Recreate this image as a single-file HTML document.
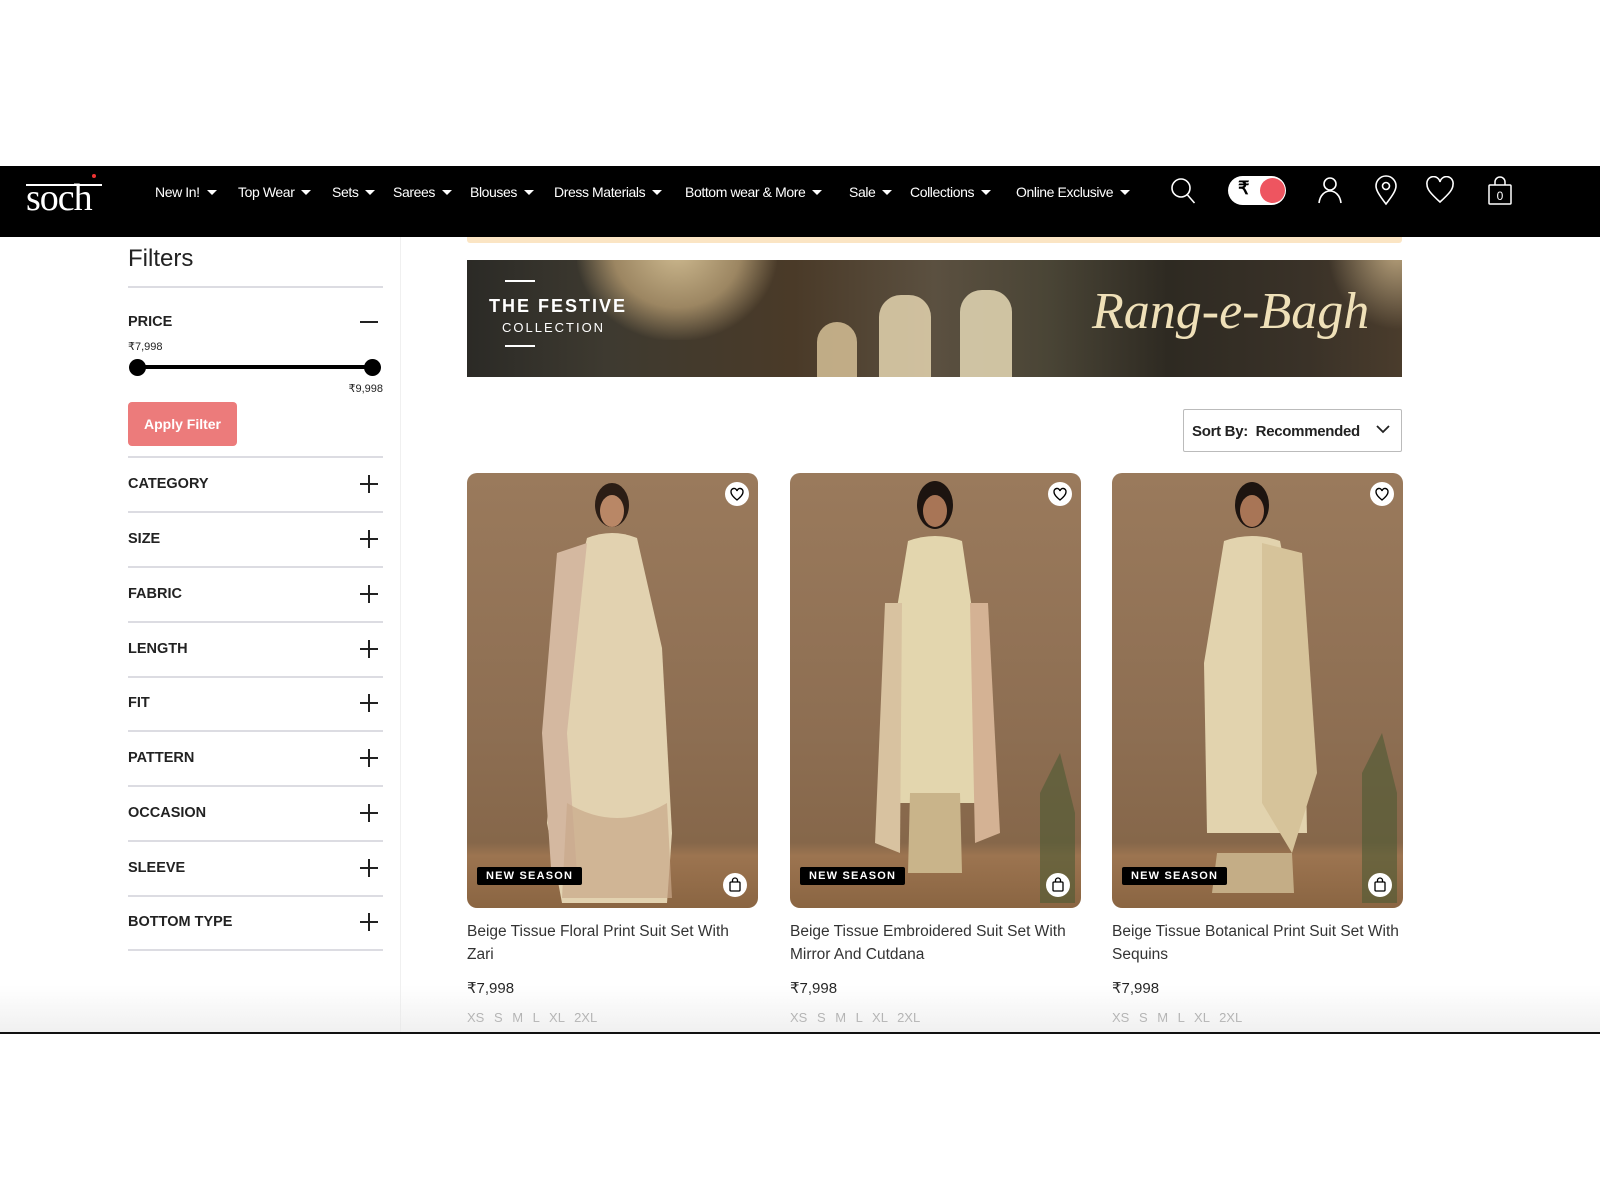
<!DOCTYPE html>
<html><head><meta charset="utf-8">
<style>
*{margin:0;padding:0;box-sizing:border-box}
body{width:1600px;height:1200px;background:#fff;position:relative;overflow:hidden;font-family:"Liberation Sans",sans-serif;color:#222}
.abs{position:absolute}
.nav{left:0;top:166px;width:1600px;height:71px;background:#000}
.nav .m{position:absolute;top:18px;color:#fff;font-size:14px;letter-spacing:-0.4px;white-space:nowrap}
.nav .m:after{content:"";display:inline-block;margin-left:7px;border-left:5px solid transparent;border-right:5px solid transparent;border-top:5px solid #fff;vertical-align:2px}
.ft{left:128px;width:255px;border-top:2px solid #dcdce2}
.fl{left:128px;font-size:14.5px;font-weight:bold;color:#222}
.plus{position:absolute;left:360px;width:18px;height:18px}
.plus:before{content:"";position:absolute;left:0;top:8px;width:18px;height:2px;background:#222}
.plus:after{content:"";position:absolute;left:8px;top:0;width:2px;height:18px;background:#222}
.card{position:absolute;top:473px;width:291px;height:435px;border-radius:10px;overflow:hidden;background:linear-gradient(180deg,#9a7a5c 0%,#8d6e52 60%,#86674a 85%,#9c7450 88%,#8a6542 100%)}
.wish{position:absolute;right:9px;top:9px;width:24px;height:24px;border-radius:50%;background:#fff}
.bagc{position:absolute;right:11px;bottom:11px;width:24px;height:24px;border-radius:50%;background:#fff}
.badge{position:absolute;left:10px;bottom:23px;background:#000;color:#fff;font-size:11px;font-weight:bold;letter-spacing:1.2px;padding:3px 9px;border-radius:2px}
.tt{position:absolute;font-size:15.5px;color:#333;line-height:23px;width:300px}
.pr{position:absolute;font-size:15px;color:#222}
.sz{position:absolute;font-size:13px;color:#999;word-spacing:6px}
</style></head><body>

<div class="abs nav">
  <div class="abs" style="left:26px;top:10px;color:#fff;font-family:'Liberation Serif',serif;font-size:38px;letter-spacing:-1px">soch</div>
  <div class="abs" style="left:26px;top:18px;width:76px;height:2px;background:#fff"></div>
  <div class="abs" style="left:92px;top:8px;width:4px;height:4px;border-radius:50%;background:#e33"></div>
  <span class="m" style="left:155px">New In!</span>
  <span class="m" style="left:238px">Top Wear</span>
  <span class="m" style="left:332px">Sets</span>
  <span class="m" style="left:393px">Sarees</span>
  <span class="m" style="left:470px">Blouses</span>
  <span class="m" style="left:554px">Dress Materials</span>
  <span class="m" style="left:685px">Bottom wear &amp; More</span>
  <span class="m" style="left:849px">Sale</span>
  <span class="m" style="left:910px">Collections</span>
  <span class="m" style="left:1016px">Online Exclusive</span>
  <svg class="abs" style="left:1170px;top:11px" width="28" height="30" viewBox="0 0 28 30" fill="none" stroke="#fff" stroke-width="1.6"><circle cx="11" cy="11" r="9"/><path d="M17.5 18l7 8"/></svg>
  <div class="abs" style="left:1228px;top:10px;width:58px;height:29px;border-radius:15px;background:#fff"></div>
  <div class="abs" style="left:1238px;top:12px;font-size:18px;font-weight:bold;color:#000">₹</div>
  <div class="abs" style="left:1260px;top:12px;width:25px;height:25px;border-radius:50%;background:#ee5560"></div>
  <svg class="abs" style="left:1316px;top:9px" width="28" height="30" viewBox="0 0 28 30" fill="none" stroke="#fff" stroke-width="1.6"><circle cx="14" cy="9" r="6"/><path d="M3 28c1-8 6-12 11-12s10 4 11 12"/></svg>
  <svg class="abs" style="left:1374px;top:9px" width="24" height="32" viewBox="0 0 24 32" fill="none" stroke="#fff" stroke-width="1.6"><path d="M12 29C5 20 2 15 2 11a10 10 0 0 1 20 0c0 4-3 9-10 18z"/><circle cx="12" cy="11" r="3.5"/></svg>
  <svg class="abs" style="left:1425px;top:10px" width="30" height="28" viewBox="0 0 30 28" fill="none" stroke="#fff" stroke-width="1.6"><path d="M15 26C5 17 2 13 2 8.5A6.5 6.5 0 0 1 15 6a6.5 6.5 0 0 1 13 2.5C28 13 25 17 15 26z"/></svg>
  <svg class="abs" style="left:1487px;top:10px" width="26" height="30" viewBox="0 0 26 30" fill="none" stroke="#fff" stroke-width="1.5"><rect x="2" y="9" width="22" height="19" rx="1"/><path d="M8 9V6a5 5 0 0 1 10 0v3"/><text x="13" y="24" fill="#fff" stroke="none" font-size="12" text-anchor="middle" font-family="Liberation Sans">0</text></svg>
</div>

<div class="abs" style="left:467px;top:237px;width:935px;height:6px;background:#fbe5c4;border-radius:0 0 3px 3px"></div>

<div class="abs" style="left:128px;top:245px;font-size:24px;color:#222">Filters</div>
<div class="abs" style="left:400px;top:237px;width:1px;height:796px;background:#f0f0f0"></div>
<div class="abs ft" style="top:286px"></div>
<div class="abs fl" style="top:314px">PRICE</div>
<div class="abs" style="left:360px;top:321px;width:18px;height:2px;background:#222"></div>
<div class="abs" style="left:128px;top:340px;font-size:11px">₹7,998</div>
<div class="abs" style="left:137px;top:365px;width:236px;height:4px;background:#000"></div>
<div class="abs" style="left:129px;top:359px;width:17px;height:17px;border-radius:50%;background:#000"></div>
<div class="abs" style="left:364px;top:359px;width:17px;height:17px;border-radius:50%;background:#000"></div>
<div class="abs" style="left:340px;top:382px;font-size:11px;width:43px;text-align:right">₹9,998</div>
<div class="abs" style="left:128px;top:402px;width:109px;height:44px;border-radius:4px;background:#ec7b7b;color:#fff;font-size:14px;font-weight:bold;text-align:center;line-height:44px">Apply Filter</div>
<div class="abs ft" style="top:456px"></div>

<div class="abs fl" style="top:476px">CATEGORY</div><div class="plus" style="top:475px"></div>
<div class="abs ft" style="top:511px"></div>
<div class="abs fl" style="top:531px">SIZE</div><div class="plus" style="top:530px"></div>
<div class="abs ft" style="top:566px"></div>
<div class="abs fl" style="top:586px">FABRIC</div><div class="plus" style="top:585px"></div>
<div class="abs ft" style="top:621px"></div>
<div class="abs fl" style="top:641px">LENGTH</div><div class="plus" style="top:640px"></div>
<div class="abs ft" style="top:676px"></div>
<div class="abs fl" style="top:695px">FIT</div><div class="plus" style="top:694px"></div>
<div class="abs ft" style="top:730px"></div>
<div class="abs fl" style="top:750px">PATTERN</div><div class="plus" style="top:749px"></div>
<div class="abs ft" style="top:785px"></div>
<div class="abs fl" style="top:805px">OCCASION</div><div class="plus" style="top:804px"></div>
<div class="abs ft" style="top:840px"></div>
<div class="abs fl" style="top:860px">SLEEVE</div><div class="plus" style="top:859px"></div>
<div class="abs ft" style="top:895px"></div>
<div class="abs fl" style="top:914px">BOTTOM TYPE</div><div class="plus" style="top:913px"></div>
<div class="abs ft" style="top:949px"></div>

<div class="abs" style="left:467px;top:260px;width:935px;height:117px;overflow:hidden;background:linear-gradient(90deg,#2b2a26 0%,#3e3a30 15%,#4a3a28 35%,#5b5040 50%,#4a4536 62%,#2e2a22 75%,#3a3228 90%,#4a3c2c 100%)">
  <div class="abs" style="left:110px;top:-10px;width:200px;height:90px;background:radial-gradient(ellipse at 50% 0%,#cdb98f 0%,#9c8662 45%,transparent 72%)"></div>
  <div class="abs" style="left:860px;top:-10px;width:100px;height:80px;background:radial-gradient(ellipse at 70% 0%,#b8a27c 0%,transparent 70%)"></div>
  <div class="abs" style="left:350px;top:62px;width:40px;height:60px;border-radius:20px 20px 0 0;background:#cdb890;opacity:.9"></div>
  <div class="abs" style="left:412px;top:35px;width:52px;height:90px;border-radius:22px 22px 0 0;background:#dccca8;opacity:.9"></div>
  <div class="abs" style="left:493px;top:30px;width:52px;height:90px;border-radius:22px 22px 0 0;background:#ddd0ae;opacity:.9"></div>
  <div class="abs" style="left:38px;top:20px;width:30px;height:2px;background:#fff"></div>
  <div class="abs" style="left:22px;top:36px;color:#fff;font-size:18px;font-weight:bold;letter-spacing:2px">THE FESTIVE</div>
  <div class="abs" style="left:35px;top:60px;color:#fff;font-size:13px;letter-spacing:2px">COLLECTION</div>
  <div class="abs" style="left:38px;top:85px;width:30px;height:2px;background:#fff"></div>
  <div class="abs" style="left:625px;top:22px;color:#efe0b8;font-family:'Liberation Serif',serif;font-style:italic;font-size:52px">Rang-e-Bagh</div>
</div>

<div class="abs" style="left:1183px;top:409px;width:219px;height:43px;border:1px solid #bbb;border-radius:2px"></div>
<div class="abs" style="left:1192px;top:423px;font-size:15px;font-weight:bold;color:#222;letter-spacing:-0.3px">Sort By:&nbsp; Recommended</div>
<svg class="abs" style="left:1376px;top:424px" width="14" height="10" viewBox="0 0 14 10" fill="none" stroke="#222" stroke-width="1.8"><path d="M1 2l6 6 6-6"/></svg>

<div class="card" style="left:467px">
  <svg width="291" height="435" style="position:absolute;left:0;top:0"><ellipse cx="145" cy="32" rx="17" ry="22" fill="#2b1d15"/><ellipse cx="145" cy="38" rx="12" ry="16" fill="#b98766"/><path d="M120 65 Q145 55 170 65 L195 175 L205 360 L200 430 L95 430 L80 350 L95 170Z" fill="#e2d2b0"/><path d="M90 80 L120 70 L100 260 L110 400 L85 410 L75 260Z" fill="#d4b8a0"/><path d="M100 330 Q150 360 200 330 L205 425 L95 425Z" fill="#c9a88a" opacity=".7"/></svg>
  <div class="wish"><svg width="24" height="24" viewBox="0 0 24 24" fill="none" stroke="#000" stroke-width="1.4"><path d="M12 18C7 14 6 12 6 10a3 3 0 0 1 6-1 3 3 0 0 1 6 1c0 2-1 4-6 8z"/></svg></div>
  <div class="badge">NEW SEASON</div>
  <div class="bagc"><svg width="24" height="24" viewBox="0 0 24 24" fill="none" stroke="#000" stroke-width="1.3"><rect x="7" y="9" width="10" height="9" rx="1"/><path d="M9.5 9V7.5a2.5 2.5 0 0 1 5 0V9"/></svg></div>
</div>
<div class="card" style="left:790px">
  <svg width="291" height="435" style="position:absolute;left:0;top:0"><ellipse cx="145" cy="32" rx="18" ry="24" fill="#1d1410"/><ellipse cx="145" cy="38" rx="12" ry="16" fill="#a87556"/><path d="M118 68 Q145 58 172 68 L190 190 L195 330 L100 330 L98 190Z" fill="#e3d6ae"/><path d="M120 320 L170 320 L172 400 L118 400Z" fill="#c9b48a"/><path d="M95 130 L112 130 L110 380 L85 370Z" fill="#d8c2a0"/><path d="M180 130 L198 130 L210 360 L185 370Z" fill="#d4b294"/><path d="M250 320 L270 280 L285 340 L285 430 L250 430Z" fill="#4c5a34" opacity=".6"/></svg>
  <div class="wish"><svg width="24" height="24" viewBox="0 0 24 24" fill="none" stroke="#000" stroke-width="1.4"><path d="M12 18C7 14 6 12 6 10a3 3 0 0 1 6-1 3 3 0 0 1 6 1c0 2-1 4-6 8z"/></svg></div>
  <div class="badge">NEW SEASON</div>
  <div class="bagc"><svg width="24" height="24" viewBox="0 0 24 24" fill="none" stroke="#000" stroke-width="1.3"><rect x="7" y="9" width="10" height="9" rx="1"/><path d="M9.5 9V7.5a2.5 2.5 0 0 1 5 0V9"/></svg></div>
</div>
<div class="card" style="left:1112px">
  <svg width="291" height="435" style="position:absolute;left:0;top:0"><ellipse cx="140" cy="32" rx="17" ry="23" fill="#1d1410"/><ellipse cx="140" cy="38" rx="12" ry="16" fill="#a87556"/><path d="M112 68 Q140 58 168 68 L192 190 L195 360 L95 360 L92 190Z" fill="#e2d3ae"/><path d="M150 70 L190 80 L205 300 L180 380 L150 330Z" fill="#d6c39a"/><path d="M105 380 L180 380 L182 420 L100 420Z" fill="#c4ad86"/><path d="M250 300 L270 260 L285 320 L285 430 L250 430Z" fill="#4c5a34" opacity=".6"/></svg>
  <div class="wish"><svg width="24" height="24" viewBox="0 0 24 24" fill="none" stroke="#000" stroke-width="1.4"><path d="M12 18C7 14 6 12 6 10a3 3 0 0 1 6-1 3 3 0 0 1 6 1c0 2-1 4-6 8z"/></svg></div>
  <div class="badge">NEW SEASON</div>
  <div class="bagc"><svg width="24" height="24" viewBox="0 0 24 24" fill="none" stroke="#000" stroke-width="1.3"><rect x="7" y="9" width="10" height="9" rx="1"/><path d="M9.5 9V7.5a2.5 2.5 0 0 1 5 0V9"/></svg></div>
</div>

<div class="tt" style="left:467px;top:920px">Beige Tissue Floral Print Suit Set With<br>Zari</div>
<div class="tt" style="left:790px;top:920px">Beige Tissue Embroidered Suit Set With<br>Mirror And Cutdana</div>
<div class="tt" style="left:1112px;top:920px">Beige Tissue Botanical Print Suit Set With<br>Sequins</div>
<div class="pr" style="left:467px;top:979px">₹7,998</div>
<div class="pr" style="left:790px;top:979px">₹7,998</div>
<div class="pr" style="left:1112px;top:979px">₹7,998</div>
<div class="sz" style="left:467px;top:1010px">XS S M L XL 2XL</div>
<div class="sz" style="left:790px;top:1010px">XS S M L XL 2XL</div>
<div class="sz" style="left:1112px;top:1010px">XS S M L XL 2XL</div>

<div class="abs" style="left:0;top:985px;width:1600px;height:47px;background:linear-gradient(180deg,rgba(255,255,255,0),rgba(228,228,228,.55))"></div>
<div class="abs" style="left:0;top:1032px;width:1600px;height:2px;background:#111"></div>
</body></html>
